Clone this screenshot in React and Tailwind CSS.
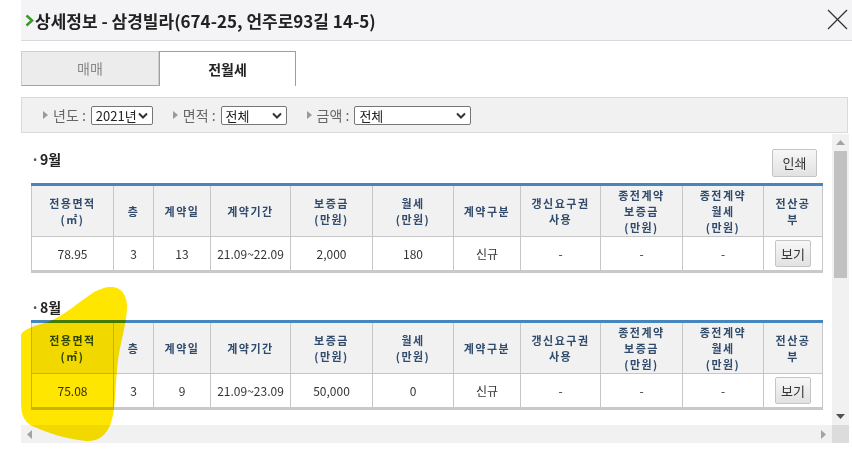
import React from "react";

const cols = [82, 40, 57, 80, 82, 81, 67, 80, 82, 81, 59];
const headers = [
  ["전용면적", "(㎡)"],
  ["층"],
  ["계약일"],
  ["계약기간"],
  ["보증금", "(만원)"],
  ["월세", "(만원)"],
  ["계약구분"],
  ["갱신요구권", "사용"],
  ["종전계약", "보증금", "(만원)"],
  ["종전계약", "월세", "(만원)"],
  ["전산공", "부"],
];

function Tri() {
  return (
    <svg width="5" height="8" viewBox="0 0 5 8" className="shrink-0">
      <path d="M0 0 L5 4 L0 8 Z" fill="#9a9a9a" />
    </svg>
  );
}

function Chevron() {
  return (
    <svg width="10" height="7" viewBox="0 0 10 7" className="shrink-0">
      <polyline points="1,1.5 5,5.5 9,1.5" fill="none" stroke="#333" strokeWidth="2" />
    </svg>
  );
}

function FakeSelect({ value, w }) {
  return (
    <div
      className={`h-[19px] ${w} bg-white border border-[#767676] rounded-[2px] flex items-center justify-between pl-[4px] pr-[4px] text-[13px] leading-none text-[#222]`}
    >
      <span>{value}</span>
      <Chevron />
    </div>
  );
}

function Filter({ label, value, w }) {
  return (
    <div className="flex items-center">
      <Tri />
      <span className="ml-[5px] mr-[5px] text-[14px] text-[#666] leading-none">{label} :</span>
      <FakeSelect value={value} w={w} />
    </div>
  );
}

function GrayBtn({ children, cls }) {
  return (
    <div
      className={`flex items-center justify-center border border-[#c4c4c4] rounded-[2px] bg-gradient-to-b from-[#f7f7f7] to-[#e2e2e2] text-[13px] text-[#333] ${cls}`}
    >
      {children}
    </div>
  );
}

function DataTable({ row }) {
  return (
    <table className="table-fixed border-collapse w-[791px] border-t-[3px] border-t-[#4586be] border-b-[3px] border-b-[#c9c9c9]">
      <colgroup>
        {cols.map((c, i) => (
          <col key={i} style={{ width: c }} />
        ))}
      </colgroup>
      <thead>
        <tr className="h-[52px]">
          {headers.map((h, i) => (
            <th
              key={i}
              className="bg-[#f1f1f1] border border-[#c6c6c6] border-t-0 p-0 text-center align-middle text-[11px] tracking-[1.5px] font-bold leading-[16px] text-[#2f4a6b]"
            >
              {h.map((l, j) => (
                <div key={j}>{l}</div>
              ))}
            </th>
          ))}
        </tr>
      </thead>
      <tbody>
        <tr className="h-[35px]">
          {row.map((v, i) => (
            <td
              key={i}
              className="border border-[#c6c6c6] border-b-0 p-0 text-center align-middle text-[12px] text-[#333] bg-white"
            >
              {v}
            </td>
          ))}
          <td className="border border-[#c6c6c6] border-b-0 p-0 align-middle bg-white">
            <div className="flex justify-center">
              <GrayBtn cls="w-[36px] h-[27px]">보기</GrayBtn>
            </div>
          </td>
        </tr>
      </tbody>
    </table>
  );
}

function SectionLabel({ children }) {
  return (
    <div className="flex items-center h-[20px] text-[14px] font-semibold text-[#222]">
      <span className="w-[9px] text-[#555] font-bold">·</span>
      <span>{children}</span>
    </div>
  );
}

export default function App() {
  return (
    <div className="relative w-[852px] h-[457px] overflow-hidden bg-white font-['Noto_Sans_CJK_KR','Noto_Sans',sans-serif]">
      <div className="flex flex-col pl-[21px]">
        {/* Header */}
        <div className="h-[41px] bg-[#f4f4f6] border-b border-[#d9d9d9] flex items-center justify-between pl-[4px] pr-[4px]">
          <div className="flex items-center">
            <svg width="9" height="13" viewBox="0 0 9 13" className="mr-[1px]">
              <polyline points="1.5,1.5 7,6.5 1.5,11.5" fill="none" stroke="#3a9a2a" strokeWidth="2.6" />
            </svg>
            <span className="text-[17px] font-bold text-[#222] leading-none">
              상세정보 - 삼경빌라(674-25, 언주로93길 14-5)
            </span>
          </div>
          <svg width="21" height="21" viewBox="0 0 21 21" className="mb-[2px]">
            <line x1="1" y1="1" x2="20" y2="20" stroke="#333" strokeWidth="1.3" />
            <line x1="20" y1="1" x2="1" y2="20" stroke="#333" strokeWidth="1.3" />
          </svg>
        </div>

        {/* Tabs */}
        <div className="flex mt-[10px] h-[35px]">
          <div className="w-[138px] h-full bg-[#ececec] border border-[#cfcfcf] border-b-[#8fb584] flex items-center justify-center text-[14px] text-[#888]">
            매매
          </div>
          <div className="w-[137px] h-full bg-white border border-[#86b27a] border-b-0 flex items-center justify-center text-[14px] font-semibold text-[#222]">
            전월세
          </div>
        </div>

        {/* Filter bar */}
        <div className="mt-[11px] w-[827px] h-[36px] bg-[#f1f1f1] border border-[#dadada] flex items-center pl-[21px] gap-[20px]">
          <Filter label="년도" value="2021년" w="w-[62px]" />
          <Filter label="면적" value="전체" w="w-[66px]" />
          <Filter label="금액" value="전체" w="w-[117px]" />
        </div>

        {/* Scroll pane */}
        <div className="mt-[1px] w-[828px] h-[309px] flex flex-col">
          <div className="flex h-[291px]">
            <div className="w-[811px] overflow-hidden pl-[10px] pt-[15px]">
              <div className="w-[791px] flex justify-between items-start h-[28px] pr-[5px]">
                <SectionLabel>9월</SectionLabel>
                <GrayBtn cls="w-[45px] h-[28px]">인쇄</GrayBtn>
              </div>
              <div className="mt-[6px]">
                <DataTable row={["78.95", "3", "13", "21.09~22.09", "2,000", "180", "신규", "-", "-", "-"]} />
              </div>
              <div className="mt-[24px]">
                <SectionLabel>8월</SectionLabel>
              </div>
              <div className="mt-[3px]">
                <DataTable row={["75.08", "3", "9", "21.09~23.09", "50,000", "0", "신규", "-", "-", "-"]} />
              </div>
            </div>
            {/* vertical scrollbar */}
            <div className="w-[17px] h-full bg-[#f1f1f1] flex flex-col items-center">
              <div className="h-[17px] flex items-center justify-center">
                <svg width="9" height="5" viewBox="0 0 9 5">
                  <path d="M0 5 L4.5 0 L9 5 Z" fill="#a3a3a3" />
                </svg>
              </div>
              <div className="w-[13px] h-[127px] bg-[#c1c1c1]" />
              <div className="flex-1" />
              <div className="h-[17px] flex items-center justify-center">
                <svg width="9" height="5" viewBox="0 0 9 5">
                  <path d="M0 0 L4.5 5 L9 0 Z" fill="#505050" />
                </svg>
              </div>
            </div>
          </div>
          {/* horizontal scrollbar */}
          <div className="flex h-[18px]">
            <div className="w-[811px] h-full bg-[#f1f1f1] flex items-center justify-between px-[6px]">
              <svg width="5" height="9" viewBox="0 0 5 9">
                <path d="M5 0 L0 4.5 L5 9 Z" fill="#a3a3a3" />
              </svg>
              <svg width="5" height="9" viewBox="0 0 5 9">
                <path d="M0 0 L5 4.5 L0 9 Z" fill="#a3a3a3" />
              </svg>
            </div>
            <div className="w-[17px] h-full bg-[#dcdcdc]" />
          </div>
        </div>
      </div>

      {/* yellow marker annotation */}
      <svg
        className="absolute left-0 top-0 pointer-events-none mix-blend-multiply"
        width="852"
        height="457"
        viewBox="0 0 852 457"
      >
        <path
          d="M110,287 C119,286 127,293 127,306 C127,322 121,340 118,360 C115,385 116,408 111,423 C106,437 96,442 86,441 C66,439 48,433 32,426 C23,421 21,413 21,402 L21,336 C21,330 34,326 48,322 C64,316 80,301 94,292 C100,289 105,287 110,287 Z"
          fill="#ffe600"
        />
      </svg>
    </div>
  );
}
